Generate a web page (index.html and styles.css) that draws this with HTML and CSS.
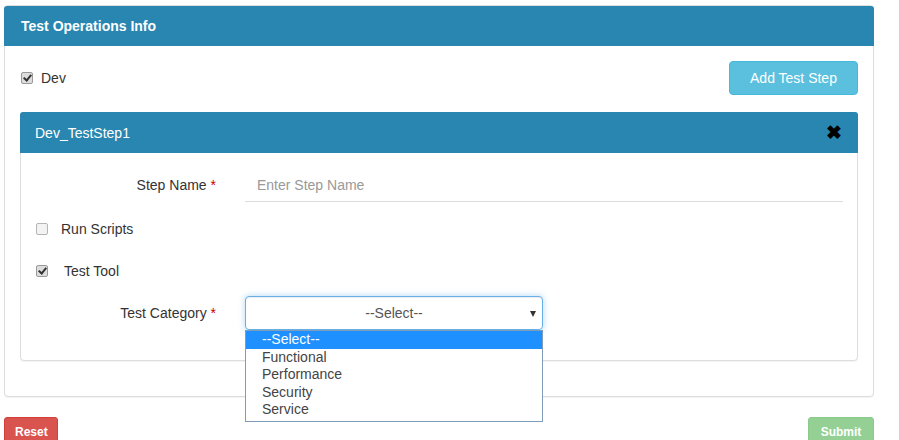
FILE: index.html
```html
<!DOCTYPE html>
<html>
<head>
<meta charset="utf-8">
<link rel="stylesheet" href="styles.css">
</head>
<body>
<div class="page">
  <div class="panel outer">
    <div class="panel-heading main-heading">Test Operations Info</div>
    <div class="panel-body outer-body">
      <div class="top-row">
        <label class="check dev"><span class="cb checked"></span><span>Dev</span></label>
        <button class="btn btn-info">Add Test Step</button>
      </div>
      <div class="panel inner">
        <div class="panel-heading step-heading">
          <span>Dev_TestStep1</span>
          <span class="close">&#x2716;</span>
        </div>
        <div class="panel-body inner-body">
          <div class="form-row name-row">
            <div class="label">Step Name <span class="req">*</span></div>
            <div class="input">Enter Step Name</div>
          </div>
          <label class="check run"><span class="cb"></span><span>Run Scripts</span></label>
          <label class="check tool"><span class="cb checked"></span><span>Test Tool</span></label>
          <div class="form-row cat-row">
            <div class="label">Test Category <span class="req">*</span></div>
            <div class="select-wrap">
              <div class="select">--Select--<span class="arrow"></span></div>
              <ul class="listbox">
                <li class="active">--Select--</li>
                <li>Functional</li>
                <li>Performance</li>
                <li>Security</li>
                <li>Service</li>
              </ul>
            </div>
          </div>
        </div>
      </div>
    </div>
  </div>
  <div class="actions">
    <button class="btn btn-sm btn-danger">Reset</button>
    <button class="btn btn-sm btn-success">Submit</button>
  </div>
</div>
</body>
</html>
```
FILE: styles.css
```css
* { box-sizing: border-box; }
html, body { margin: 0; padding: 0; background: #fff; }
body {
  font-family: "Liberation Sans", Arial, sans-serif;
  font-size: 14px;
  color: #333;
}
.page { padding: 5px 0 0 4px; width: 874px; }
.panel {
  border: 1px solid #ddd;
  border-radius: 4px;
  background: #fff;
  box-shadow: 0 1px 1px rgba(0,0,0,0.05);
}
.panel-heading {
  background: #2986b0;
  color: #fff;
  border-radius: 3px 3px 0 0;
  display: flex;
  align-items: center;
}
.main-heading {
  height: 40px;
  padding: 0 17px;
  font-weight: bold;
  font-size: 14px;
  margin: 0 -1px;
}
.outer { width: 870px; margin-bottom: 20px; }
.outer-body { padding: 15px 15px 35px 15px; }
.top-row {
  display: flex;
  justify-content: space-between;
  align-items: center;
  margin-bottom: 17px;
}
.check {
  display: flex;
  align-items: center;
  color: #333;
}
.cb {
  width: 12px;
  height: 12px;
  border: 1px solid #b4b4b4;
  border-radius: 2px;
  background: #f3f3f3;
  position: relative;
  display: inline-block;
}
.cb.checked { background: #ddd; border-color: #9a9a9a; }
.cb.checked::after {
  content: "";
  position: absolute;
  left: 3px;
  top: 0px;
  width: 3px;
  height: 6px;
  border: solid #333;
  border-width: 0 2px 2px 0;
  transform: rotate(40deg);
}
.dev { margin-left: 1px; }
.dev .cb { margin-right: 8px; }
.btn {
  font-family: "Liberation Sans", Arial, sans-serif;
  border: 1px solid transparent;
  border-radius: 4px;
  color: #fff;
  cursor: pointer;
}
.btn-info {
  background: #5bc0de;
  border-color: #46b8da;
  font-size: 14px;
  height: 34px;
  width: 129px;
  padding: 0;
}
.inner { width: 838px; }
.step-heading {
  padding: 0 16px 0 15px;
  justify-content: space-between;
  font-size: 14px;
  margin: -1px -1px 0 -1px;
  height: 41px;
}
.close {
  color: #000;
  font-size: 19px;
  font-weight: bold;
  line-height: 1;
}
.inner-body { padding: 15px 14px 30px 15px; }
.form-row {
  display: flex;
  align-items: center;
}
.label {
  width: 180px;
  text-align: right;
  margin-right: 29px;
  color: #333;
}
.req { color: #c00; }
.input {
  flex: 1;
  height: 34px;
  border-bottom: 1px solid #ddd;
  padding-left: 12px;
  color: #999;
  display: flex;
  align-items: center;
}
.run { margin-top: 15px; height: 24px; }
.run .cb { margin-right: 13px; }
.tool { margin-top: 18px; height: 24px; }
.tool .cb { margin-right: 16px; }
.cat-row { margin-top: 13px; }
.select-wrap { position: relative; width: 298px; }
.select {
  height: 34px;
  border: 1px solid #66afe9;
  border-radius: 4px;
  box-shadow: inset 0 1px 1px rgba(0,0,0,.075), 0 0 6px rgba(102,175,233,.5);
  color: #555;
  display: flex;
  align-items: center;
  justify-content: center;
  position: relative;
  background: #fff;
}
.arrow {
  position: absolute;
  right: 6px;
  top: 14px;
  width: 0;
  height: 0;
  border-left: 3px solid transparent;
  border-right: 3px solid transparent;
  border-top: 6px solid #333;
}
.listbox {
  position: absolute;
  left: 0;
  top: 34px;
  width: 298px;
  margin: 0;
  padding: 0 0 2px 0;
  list-style: none;
  background: #fff;
  border: 1px solid #7f9db9;
  z-index: 5;
}
.listbox li {
  height: 17.6px;
  line-height: 17.6px;
  padding-left: 16px;
  color: #444;
}
.listbox li.active { background: #1e90ff; color: #fff; }
.actions {
  display: flex;
  justify-content: space-between;
  width: 870px;
}
.btn-sm {
  font-size: 12px;
  font-weight: bold;
  height: 30px;
  padding: 0 10px;
  border-radius: 3px;
}
.btn-danger { background: #d9534f; border-color: #d43f3a; width: 54px; }
.btn-success { background: #5cb85c; border-color: #4cae4c; opacity: .65; width: 66px; }
```
